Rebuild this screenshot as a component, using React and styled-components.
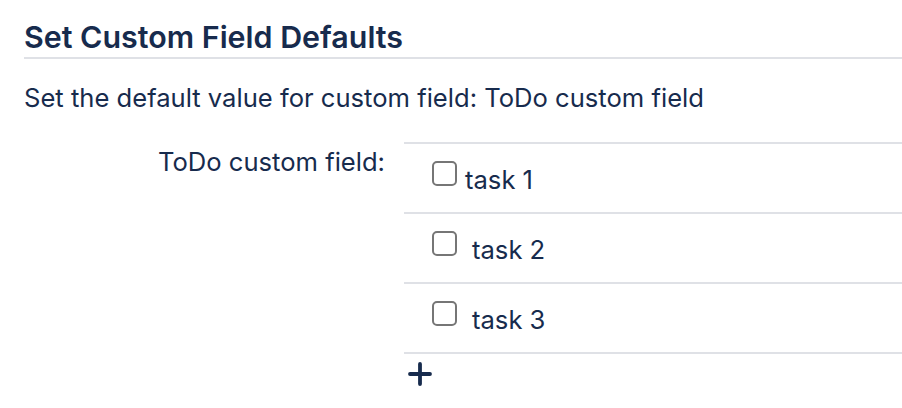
import React from 'react'
import styled, { createGlobalStyle } from 'styled-components'

const GlobalStyle = createGlobalStyle`
  html, body {
    margin: 0;
    padding: 0;
    background: #fff;
  }
  body {
    font-family: Inter, "Noto Sans", "Liberation Sans", sans-serif;
    color: #172b4d;
  }
`

const Page = styled.main`
  padding: 21px 0 0 24px;
`

const Heading = styled.h2`
  margin: 0;
  padding-bottom: 4px;
  font-size: 30.4px;
  font-weight: 600;
  line-height: 32px;
  border-bottom: 2px solid #dfe1e6;
`

const Description = styled.p`
  margin: 24px 0 0 0;
  font-size: 25.6px;
  line-height: 30px;
`

const FieldRow = styled.div`
  display: grid;
  grid-template-columns: 361px 1fr;
  column-gap: 19px;
  margin-top: 29px;
`

const Label = styled.label`
  text-align: right;
  font-size: 25.6px;
  line-height: 30px;
  padding-top: 5px;
`

const TaskList = styled.div`
  display: flex;
  flex-direction: column;
`

const TaskRow = styled.div`
  display: flex;
  align-items: center;
  height: 68px;
  padding-left: 28px;
  border-top: 2px solid #dfe1e6;

  &:last-of-type {
    border-bottom: 2px solid #dfe1e6;
  }
`

const Box = styled.span`
  box-sizing: border-box;
  width: 25px;
  height: 25px;
  border: 2px solid #767676;
  border-radius: 5px;
  margin-top: -9px;
`

const TaskText = styled.span`
  font-size: 25.6px;
  line-height: 30px;
  padding-top: 4px;
  margin-left: ${p => p.$gap}px;
`

const AddButton = styled.button`
  align-self: flex-start;
  background: none;
  border: none;
  padding: 0;
  margin: 8px 0 0 4px;
  width: 24px;
  height: 24px;
  color: #172b4d;
  cursor: pointer;
`

const tasks = [
  { name: 'task 1', gap: 8 },
  { name: 'task 2', gap: 15 },
  { name: 'task 3', gap: 15 },
]

export default function App() {
  return (
    <>
      <GlobalStyle />
      <Page>
        <Heading>Set Custom Field Defaults</Heading>
        <Description>Set the default value for custom field: ToDo custom field</Description>
        <FieldRow>
          <Label>ToDo custom field:</Label>
          <TaskList>
            {tasks.map(t => (
              <TaskRow key={t.name}>
                <Box />
                <TaskText $gap={t.gap}>{t.name}</TaskText>
              </TaskRow>
            ))}
            <AddButton aria-label="Add">
              <svg width="24" height="24" viewBox="0 0 24 24">
                <path d="M12 2v20M2 12h20" stroke="currentColor" strokeWidth="3.8" strokeLinecap="round" />
              </svg>
            </AddButton>
          </TaskList>
        </FieldRow>
      </Page>
    </>
  )
}
